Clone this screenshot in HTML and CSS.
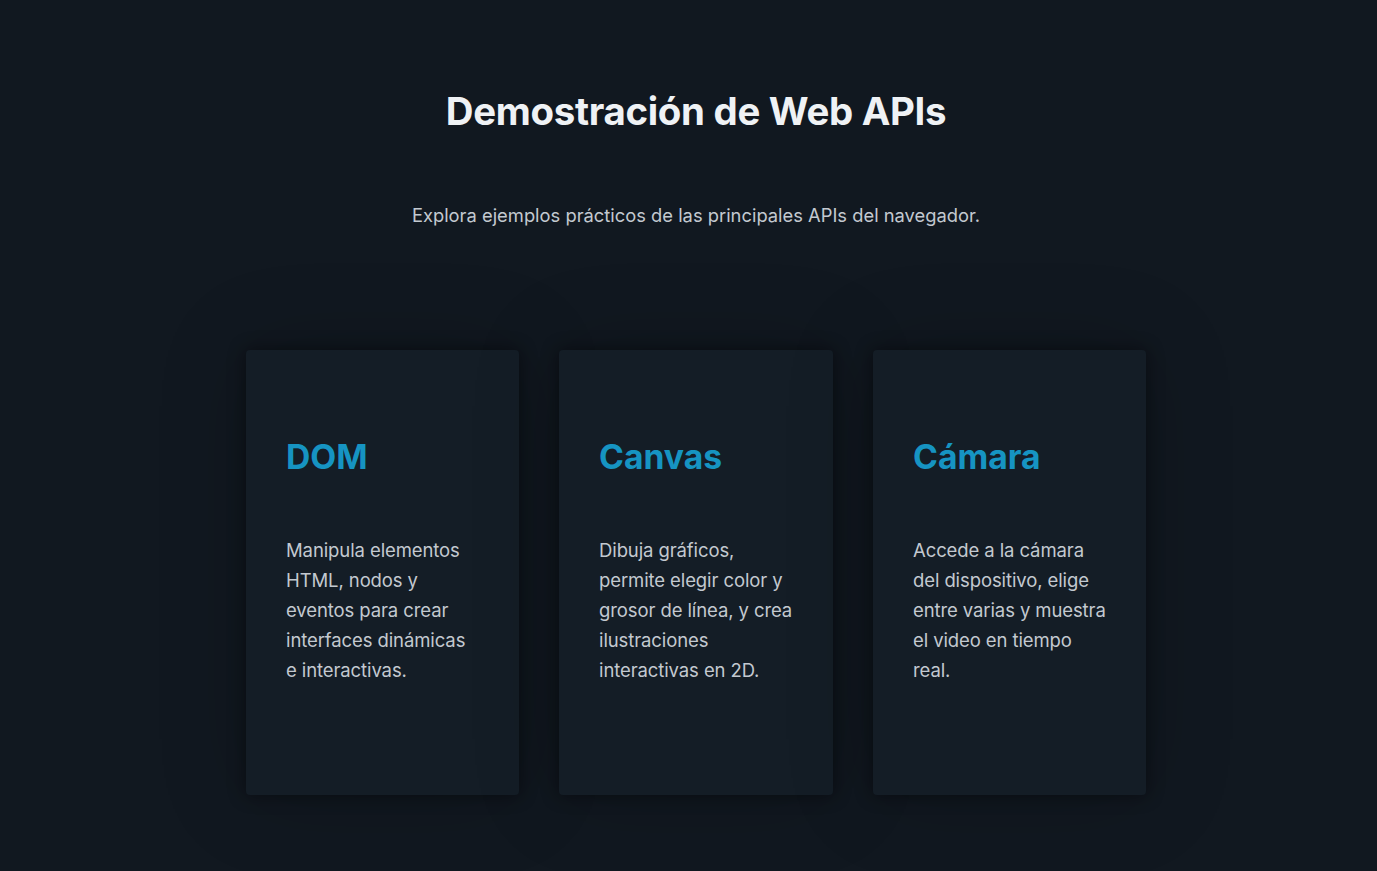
FILE: index.html
```html
<!DOCTYPE html>
<html lang="es">
<head>
<meta charset="utf-8">
<title>Demostración de Web APIs</title>
<link rel="stylesheet" href="styles.css">
</head>
<body>
<main class="page">
  <header class="hero">
    <h1 class="title">Demostración de Web APIs</h1>
    <p class="subtitle">Explora ejemplos prácticos de las principales APIs del navegador.</p>
  </header>
  <section class="cards">
    <article class="card">
      <h2 class="card-title">DOM</h2>
      <p class="card-text">Manipula elementos HTML, nodos y eventos para crear interfaces dinámicas e interactivas.</p>
    </article>
    <article class="card">
      <h2 class="card-title">Canvas</h2>
      <p class="card-text">Dibuja gráficos, permite elegir color y grosor de línea, y crea ilustraciones interactivas en 2D.</p>
    </article>
    <article class="card">
      <h2 class="card-title">Cámara</h2>
      <p class="card-text">Accede a la cámara del dispositivo, elige entre varias y muestra el video en tiempo real.</p>
    </article>
  </section>
</main>
</body>
</html>
```

FILE: styles.css
```css
* { box-sizing: border-box; }
html, body { margin: 0; padding: 0; }
body {
  background: #111820;
  font-family: Inter, "Noto Sans", sans-serif;
  color: #c3c9d0;
  min-height: 871px;
  padding-left: 15px;
  overflow: hidden;
}
.page {
  display: flex;
  flex-direction: column;
  align-items: center;
}
.hero {
  display: flex;
  flex-direction: column;
  align-items: center;
  padding-top: 86px;
}
.title {
  margin: 0;
  font-size: 38.4px;
  line-height: 50px;
  font-weight: 700;
  color: #eff2f5;
  letter-spacing: -0.3px;
}
.subtitle {
  margin: 0;
  margin-top: 65px;
  font-size: 18.35px;
  line-height: 28px;
  color: #c3c9d0;
}
.cards {
  display: flex;
  gap: 40px;
  margin-top: 121px;
}
.card {
  width: 273px;
  height: 445px;
  background: #141d26;
  border-radius: 4px;
  padding: 86px 38px 40px 40px;
  box-shadow: 0 0 18px rgba(0, 0, 0, 0.45), 0 0 90px rgba(0, 0, 0, 0.18);
}
.card:nth-child(2) { width: 274px; }
.card-title {
  margin: 0;
  font-size: 33.7px;
  line-height: 42px;
  font-weight: 700;
  color: #1694c2;
}
.card-text {
  margin: 0;
  margin-top: 57px;
  font-size: 18.5px;
  line-height: 30px;
  color: #c3c9d0;
  letter-spacing: -0.1px;
}
```
